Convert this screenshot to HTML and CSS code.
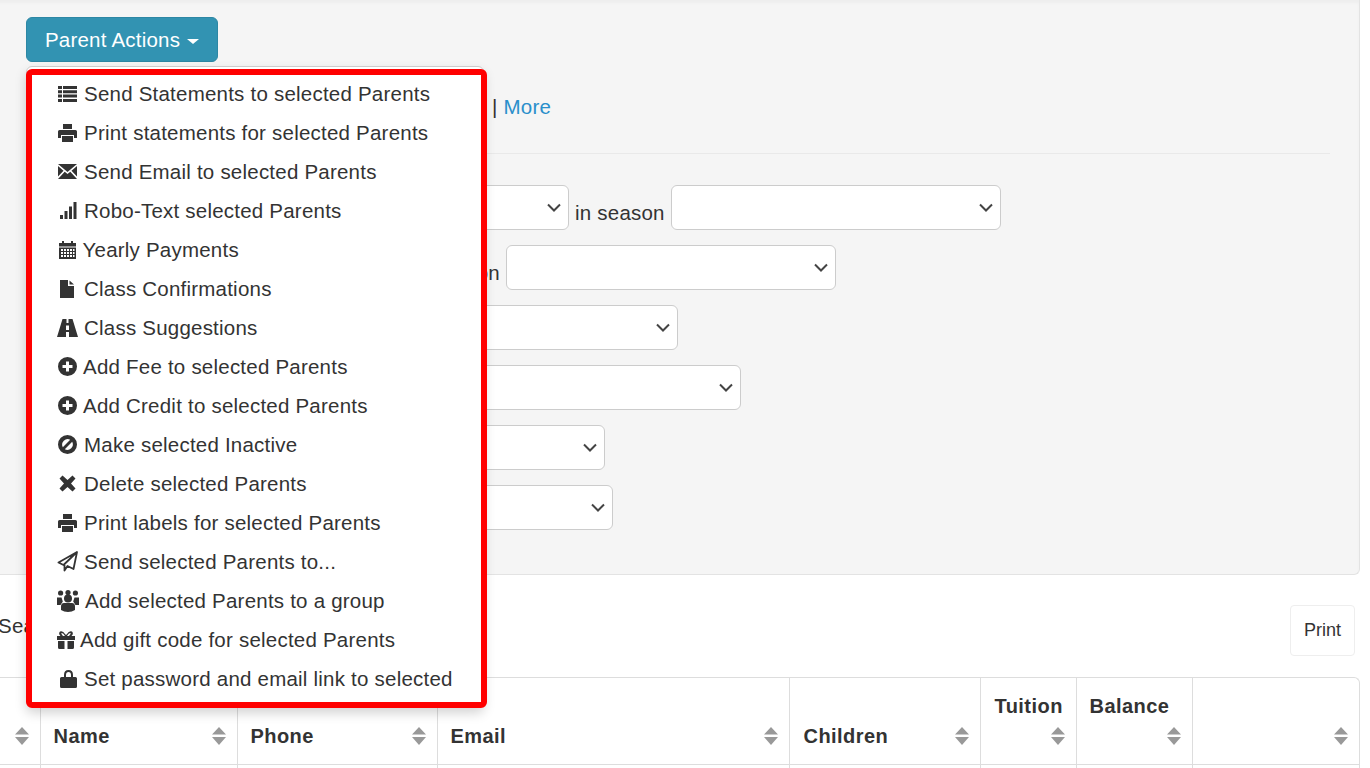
FILE: index.html
```html
<!DOCTYPE html>
<html lang="en">
<head>
  <meta charset="UTF-8" />
  <meta name="viewport" content="width=device-width, initial-scale=1.0"/>
  <title>Parents</title>
  <link rel="stylesheet" href="styles.css">
</head>
<body>
  <svg class="icon-defs" xmlns="http://www.w3.org/2000/svg">
    <symbol id="i-print" viewBox="0 0 19 18"><path d="M5 0h9v5H5zM1.500 6h16A1.500 1.500 0 0 1 19 7.500V14h-3v-3H3v3H0V7.500A1.500 1.500 0 0 1 1.500 6zM4 12h11v6H4z"/></symbol>
    <symbol id="i-plus" viewBox="0 0 19 19"><path fill-rule="evenodd" d="M9.500 0a9.500 9.500 0 1 1 0 19a9.500 9.500 0 0 1 0-19zM8 4.500V8H4.500v3H8v3.500h3V11h3.500V8H11V4.500z"/></symbol>
    <symbol id="i-sort" viewBox="0 0 14 18"><path d="M7 0l7 7.500H0zM0 10h14l-7 8z"/></symbol>
  </svg>

  <div class="page">
    <div class="well">
      <div class="actions">
        <button class="btn-actions">Parent Actions <span class="caret"></span></button>
        <ul class="menu">
          <li><svg width="19" height="16" viewBox="0 0 19 16"><path d="M0 0h4v3H0zM5 0h14v3H5zM0 4.300h4v3H0zM5 4.300h14v3H5zM0 8.600h4v3H0zM5 8.600h14v3H5zM0 13h4v3H0zM5 13h14v3H5z"/></svg>Send Statements to selected Parents</li>
          <li><svg width="19" height="18"><use href="#i-print"/></svg>Print statements for selected Parents</li>
          <li><svg width="19" height="15" viewBox="0 0 19 15"><path d="M0 0h19L9.500 8zM0 2l5.500 4.800L0 12.500zM19 2l-5.500 4.800 5.500 5.700zM6.700 7.800l2.800 2.300 2.800-2.300L19 15H0z"/></svg>Send Email to selected Parents</li>
          <li class="li-signal"><svg width="17" height="17" viewBox="0 0 17 17"><path d="M0 13h3v4H0zM4.500 9h3v8h-3zM9 4.500h3V17H9zM13.500 0h3v17h-3z"/></svg>Robo-Text selected Parents</li>
          <li class="li-cal"><svg width="17" height="18" viewBox="0 0 17 18"><path fill-rule="evenodd" d="M3 0h2v2h7V0h2v2h3v3.500H0V2h3zM0 6.500h17V18H0zM2 8v2h2V8zM5 8v2h2V8zM8 8v2h2V8zM11 8v2h2V8zM14 8v2h1.500V8zM2 11v2h2v-2zM5 11v2h2v-2zM8 11v2h2v-2zM11 11v2h2v-2zM14 11v2h1.500v-2zM2 14v2h2v-2zM5 14v2h2v-2zM8 14v2h2v-2zM11 14v2h2v-2zM14 14v2h1.500v-2z"/></svg>Yearly Payments</li>
          <li class="li-file"><svg width="14" height="18" viewBox="0 0 14 18"><path d="M0 0h8v6h6v12H0zM9.500 0.500L14 4.500H9.500z"/></svg>Class Confirmations</li>
          <li class="li-road"><svg width="21" height="18" viewBox="0 0 21 18"><path fill-rule="evenodd" d="M5.500 0h4v4h2V0h4L21 18h-9v-5H9v5H0zM9 6.500v4.500h3V6.500z"/></svg>Class Suggestions</li>
          <li class="li-plus"><svg width="19" height="19"><use href="#i-plus"/></svg>Add Fee to selected Parents</li>
          <li class="li-plus"><svg width="19" height="19"><use href="#i-plus"/></svg>Add Credit to selected Parents</li>
          <li><svg width="19" height="19" viewBox="0 0 19 19"><path fill-rule="evenodd" d="M9.500 0a9.500 9.500 0 1 1 0 19a9.500 9.500 0 0 1 0-19zM4.800 12.200L12.200 4.800A5.500 5.500 0 0 0 4.800 12.200zM6.800 14.200A5.500 5.500 0 0 0 14.200 6.800z"/></svg>Make selected Inactive</li>
          <li class="li-x"><svg width="17" height="17" viewBox="0 0 17 17"><path d="M3.500 0.500L8.500 5l5-4.500 3 3L12 8.500l4.500 5-3 3-5-4.500-5 4.500-3-3L5 8.500 0.500 3.500z"/></svg>Delete selected Parents</li>
          <li><svg width="19" height="18"><use href="#i-print"/></svg>Print labels for selected Parents</li>
          <li class="li-send"><svg width="21" height="21" viewBox="0 0 21 21"><path fill="none" stroke="#333" stroke-width="1.800" stroke-linejoin="round" d="M20 1L1.500 11.500l5 2.500L20 1L16.500 18l-6-3-3 4.500V14"/></svg>Send selected Parents to...</li>
          <li class="li-group"><svg width="22" height="22" viewBox="0 0 22 22"><circle cx="3.600" cy="3" r="2.600"/><circle cx="11" cy="2.600" r="2.600"/><circle cx="18.400" cy="3" r="2.600"/><circle cx="11" cy="8.500" r="4"/><path d="M0 7.500h4.500l1.300 4L3.500 15H0zM17.500 7.500H22V15h-3.500l-2.300-3.500zM7 13h8q3 0 3 3.500V20q-3 2-7 2t-7-2v-3.500Q4 13 7 13z"/></svg>Add selected Parents to a group</li>
          <li class="li-gift"><svg width="18" height="18" viewBox="0 0 18 18"><path fill-rule="evenodd" d="M3 0.500q3-1 5 2.500l1 1 1-1q2-3.500 5-2.500 2 2-0.500 4.500H18v4H0V5h3.500Q1 2.500 3 0.500zM4.500 2q-.5 1 1.500 3h2Q6 1.500 4.500 2zM13.500 2Q12 1.500 10 5h2q2-2 1.500-3zM1 10h6.500v8H2.500Q1 18 1 16.500zM10.500 10H17v6.500q0 1.500-1.500 1.500h-5z"/></svg>Add gift code for selected Parents</li>
          <li class="li-lock"><svg width="17" height="18" viewBox="0 0 17 18"><path fill-rule="evenodd" d="M8.500 0Q13 0 13 5v2h2.500Q17 7 17 8.500V16.500Q17 18 15.500 18h-14Q0 18 0 16.500V8.500Q0 7 1.500 7H4V5q0-5 4.500-5zM6 7h5V5q0-3-2.500-3T6 5z"/></svg>Set password and email link to selected</li>
        </ul>
        <div class="highlight"></div>
      </div>

      <p class="more-line"><span class="more-sep">|</span> <a href="#" class="link">More</a></p>
      <hr class="divider">

      <div class="filter-row"><span class="filter-label w1"></span><select class="sel"></select><span class="filter-text">in season</span><select class="sel"></select></div>
      <div class="filter-row"><span class="filter-label w2">on</span><select class="sel"></select></div>
      <div class="filter-row"><span class="filter-label w3"></span><select class="sel"></select></div>
      <div class="filter-row"><span class="filter-label w4"></span><select class="sel"></select></div>
      <div class="filter-row"><span class="filter-label w5"></span><select class="sel"></select></div>
      <div class="filter-row"><span class="filter-label w6"></span><select class="sel"></select></div>
    </div>

    <div class="tools">
      <span class="search">Search</span>
      <button class="btn-print">Print</button>
    </div>

    <div class="table-box">
      <table class="parents">
        <thead>
          <tr>
            <th class="c-check"><div class="th-in"><svg class="sort"><use href="#i-sort"/></svg></div></th>
            <th class="c-name"><div class="th-in">Name<svg class="sort"><use href="#i-sort"/></svg></div></th>
            <th class="c-phone"><div class="th-in">Phone<svg class="sort"><use href="#i-sort"/></svg></div></th>
            <th class="c-email"><div class="th-in">Email<svg class="sort"><use href="#i-sort"/></svg></div></th>
            <th class="c-children"><div class="th-in">Children<svg class="sort"><use href="#i-sort"/></svg></div></th>
            <th class="c-tuition"><div class="th-in">Tuition<svg class="sort"><use href="#i-sort"/></svg></div></th>
            <th class="c-balance"><div class="th-in">Balance<svg class="sort"><use href="#i-sort"/></svg></div></th>
            <th class="c-last"><div class="th-in"><svg class="sort"><use href="#i-sort"/></svg></div></th>
          </tr>
        </thead>
        <tbody>
          <tr><td></td><td></td><td></td><td></td><td></td><td></td><td></td><td></td></tr>
        </tbody>
      </table>
    </div>
  </div>
</body>
</html>
```

FILE: styles.css
```css
html, body {
  margin: 0;
  height: 768px;
  overflow: hidden;
  background: #fff;
}
body {
  font-family: "Liberation Sans", Arial, sans-serif;
  font-size: 20.5px;
  letter-spacing: .22px;
  color: #333;
}
.icon-defs {
  display: none;
}
.page {
  width: 1370px;
  margin-left: -10px;
}

/* top panel */
.well {
  box-sizing: border-box;
  height: 575px;
  padding: 17px 29px 0 35px;
  background: #f5f5f5;
  border: 1px solid #e3e3e3;
  border-top: none;
  border-radius: 0 0 6px 6px;
  box-shadow: inset 0 3px 3px rgba(0, 0, 0, .03);
}
.actions {
  position: relative;
  height: 45px;
}
.btn-actions {
  width: 192px;
  height: 45px;
  padding: 0;
  font: 20.5px "Liberation Sans", Arial, sans-serif;
  letter-spacing: .22px;
  color: #fff;
  background: #3293b2;
  border: 1px solid #2d87a4;
  border-radius: 6px;
}
.caret {
  display: inline-block;
  width: 0;
  height: 0;
  margin-left: 1px;
  vertical-align: 3px;
  border-top: 5px solid #fff;
  border-left: 6px solid transparent;
  border-right: 6px solid transparent;
}

/* dropdown */
.menu {
  position: absolute;
  z-index: 5;
  top: 49px;
  left: 0;
  box-sizing: border-box;
  width: 458px;
  height: 641px;
  margin: 0;
  padding: 7px 0 8px 31px;
  list-style: none;
  background: #fff;
  border: 1px solid #ccc;
  border-radius: 6px;
  box-shadow: 0 6px 12px rgba(0, 0, 0, .175);
}
.menu li {
  display: flex;
  align-items: center;
  gap: 7px;
  height: 39px;
  white-space: nowrap;
}
.menu svg {
  flex: none;
  fill: #333;
}
.menu .li-signal svg { margin-left: 2px; }
.menu .li-cal { gap: 6.500px; }
.menu .li-cal svg { margin-left: 1px; }
.menu .li-file { gap: 8px; }
.menu .li-file svg { margin: 0 2px; }
.menu .li-road { gap: 6px; }
.menu .li-road svg { margin-left: -1px; }
.menu .li-plus { gap: 6px; }
.menu .li-x svg { margin: 0 1px; }
.menu .li-send { gap: 6px; }
.menu .li-send svg { margin-left: -1px; }
.menu .li-group { gap: 6px; }
.menu .li-group svg { margin-left: -1px; }
.menu .li-gift { gap: 5px; }
.menu .li-gift svg { margin-left: -1px; }
.menu .li-lock { gap: 6px; }
.menu .li-lock svg { margin: 0 1px 0 2px; }

/* red annotation box round the menu */
.highlight {
  position: absolute;
  z-index: 6;
  top: 52px;
  left: 0;
  box-sizing: border-box;
  width: 461px;
  height: 639px;
  border: 6px solid #f00;
  border-radius: 6px;
}

.more-line {
  height: 24px;
  margin: 33px 0 0;
  padding-left: 466px;
  line-height: 24px;
}
.link {
  color: #2a8fcb;
  text-decoration: none;
}
.divider {
  margin: 34px 0 31px;
  border: none;
  border-top: 1px solid #e9e9e9;
}
.filter-row {
  display: flex;
  align-items: flex-end;
  gap: 6px;
  height: 45px;
  margin-bottom: 15px;
}
.filter-label, .filter-text {
  margin-bottom: 5px;
  line-height: 24px;
  text-align: right;
}
.w1 { width: 207px; }
.w2 { width: 474px; }
.w3 { width: 316px; }
.w4 { width: 379px; }
.w5 { width: 243px; }
.w6 { width: 251px; }
.sel {
  width: 330px;
  height: 45px;
  appearance: none;
  background: #fff url("data:image/svg+xml,%3Csvg xmlns='http://www.w3.org/2000/svg' width='14' height='9'%3E%3Cpath d='M1 1.500l6 6 6-6' fill='none' stroke='%23444' stroke-width='2'/%3E%3C/svg%3E") no-repeat right 7px center;
  border: 1px solid #ccc;
  border-radius: 6px;
}

/* search + print */
.tools {
  display: flex;
  justify-content: space-between;
  align-items: center;
  height: 51px;
  margin: 30px 5px 21px 8px;
}
.search {
  line-height: 24px;
  margin-top: -10px;
}
.btn-print {
  width: 65px;
  height: 51px;
  padding: 0;
  font: 18px "Liberation Sans", Arial, sans-serif;
  color: #333;
  background: #fff;
  border: 1px solid #eee;
  border-radius: 4px;
}

/* table */
.table-box {
  height: 91px;
  border: 1px solid #ddd;
  border-bottom: none;
  border-radius: 6px 6px 0 0;
  overflow: hidden;
}
.parents {
  width: 100%;
  border-collapse: collapse;
  table-layout: fixed;
}
.parents th {
  box-sizing: border-box;
  height: 86px;
  padding: 0 11px 13px 13px;
  vertical-align: bottom;
  text-align: left;
  font-size: 20px;
  letter-spacing: .45px;
  border-left: 1px solid #ddd;
  border-bottom: 1px solid #ddd;
}
.parents td {
  height: 20px;
  border-left: 1px solid #ddd;
}
.parents th:first-child, .parents td:first-child {
  border-left: none;
}
.th-in {
  display: flex;
  flex-wrap: wrap;
  justify-content: space-between;
  align-items: center;
  row-gap: 1px;
  line-height: 29px;
}
.sort {
  width: 14px;
  height: 18px;
  margin: 5.500px 0 5.500px auto;
  fill: #999;
}
.c-check { width: 49px; }
.c-name { width: 197px; }
.c-phone { width: 200px; }
.c-email { width: 352px; }
.parents .c-children { width: 191px; padding-left: 14px; }
.parents .c-tuition { width: 96px; padding-left: 14px; }
.c-balance { width: 116px; }
```
